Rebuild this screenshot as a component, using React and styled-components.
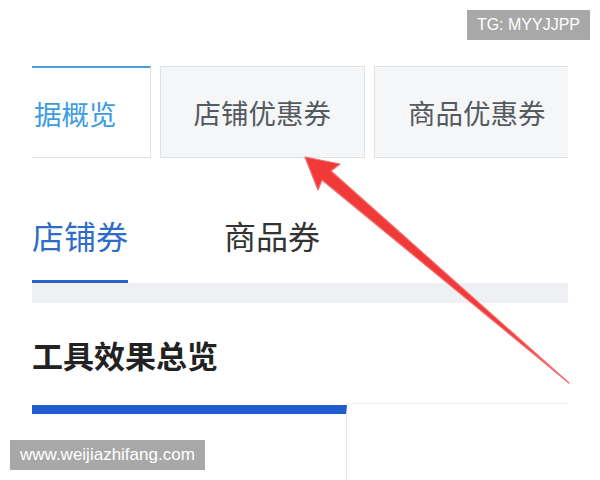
import React from 'react';
import styled, { createGlobalStyle } from 'styled-components';

/**
 * Styles
 */

const Global = createGlobalStyle`
  html, body {
    margin: 0;
    padding: 0;
    background: #fff;
  }
  body {
    font-family: "Noto Sans CJK SC", "Noto Sans", sans-serif;
  }
`;

const Page = styled.div`
  position: relative;
  width: 600px;
  height: 480px;
  overflow: hidden;
  background: #fff;
`;

const Frame = styled.div`
  margin-left: 32px;
  width: 536px;
  height: 480px;
  padding-top: 66px;
  box-sizing: border-box;
  overflow: hidden;
`;

const TabStrip = styled.div`
  display: flex;
  gap: 9px;
  height: 92px;
  margin-left: -32px;
`;

const Tab = styled.div`
  flex: none;
  display: flex;
  align-items: center;
  padding: 0 33px;
  box-sizing: border-box;
  font-size: 27.5px;
  white-space: nowrap;
  color: ${p => (p.active ? '#3d9be0' : '#555a60')};
  background: ${p => (p.active ? '#ffffff' : '#f5f6f8')};
  border: 1px solid #dfe2e5;
  border-top: ${p => (p.active ? '2px solid #4a9ddc' : '1px solid #dfe2e5')};
`;

const SubTabs = styled.div`
  display: flex;
  gap: 96px;
  margin-top: 42px;
`;

const SubTab = styled.div`
  font-size: 32px;
  line-height: 70px;
  padding-bottom: 10px;
  white-space: nowrap;
  color: ${p => (p.active ? '#2f6cc7' : '#333')};
  border-bottom: 3px solid ${p => (p.active ? '#2a62c6' : 'transparent')};
`;

const Band = styled.div`
  height: 20px;
  background: #eef0f3;
`;

const Title = styled.h2`
  margin: 27px 0 0;
  font-size: 31px;
  line-height: 50px;
  font-weight: 700;
  color: #222;
`;

const Cards = styled.div`
  display: flex;
  margin-top: 23px;
  height: 100px;
`;

const Card = styled.div`
  flex: none;
  width: 314px;
  border-top: 9px solid #1e5ccf;
  border-right: 1px solid #e3e5e8;
  margin-top: 2px;
  background: #fff;
`;

const CardRest = styled.div`
  flex: 1;
  border-top: 1px solid #eef0f2;
`;

const Watermark = styled.div`
  position: absolute;
  ${p => p.pos};
  height: 30px;
  padding: 0 10px;
  display: flex;
  align-items: center;
  background: #a8a8a8;
  color: #fff;
  font-family: "Liberation Sans", Arial, sans-serif;
  font-size: ${p => p.size}px;
  white-space: nowrap;
`;

const Overlay = styled.svg`
  position: absolute;
  left: 0;
  top: 0;
  pointer-events: none;
`;

/**
 * Component
 */

const Arrow = () => (
  <Overlay width="600" height="480" viewBox="0 0 600 480">
    <path
      d="M305 157 L340 164 L331 171 L569 383 L322 180 L318 190 Z"
      fill="#f03a3a"
      stroke="#f56a6a"
      strokeWidth="1.2"
      strokeLinejoin="round"
    />
  </Overlay>
);

export default function App() {
  return (
    <Page>
      <Global />
      <Frame>
        <TabStrip>
          <Tab active>据概览</Tab>
          <Tab>店铺优惠券</Tab>
          <Tab>商品优惠券</Tab>
        </TabStrip>
        <SubTabs>
          <SubTab active>店铺券</SubTab>
          <SubTab>商品券</SubTab>
        </SubTabs>
        <Band />
        <Title>工具效果总览</Title>
        <Cards>
          <Card />
          <CardRest />
        </Cards>
      </Frame>
      <Arrow />
      <Watermark pos="top: 10px; right: 10px;" size={16}>TG: MYYJJPP</Watermark>
      <Watermark pos="left: 10px; bottom: 10px;" size={17}>www.weijiazhifang.com</Watermark>
    </Page>
  );
}
